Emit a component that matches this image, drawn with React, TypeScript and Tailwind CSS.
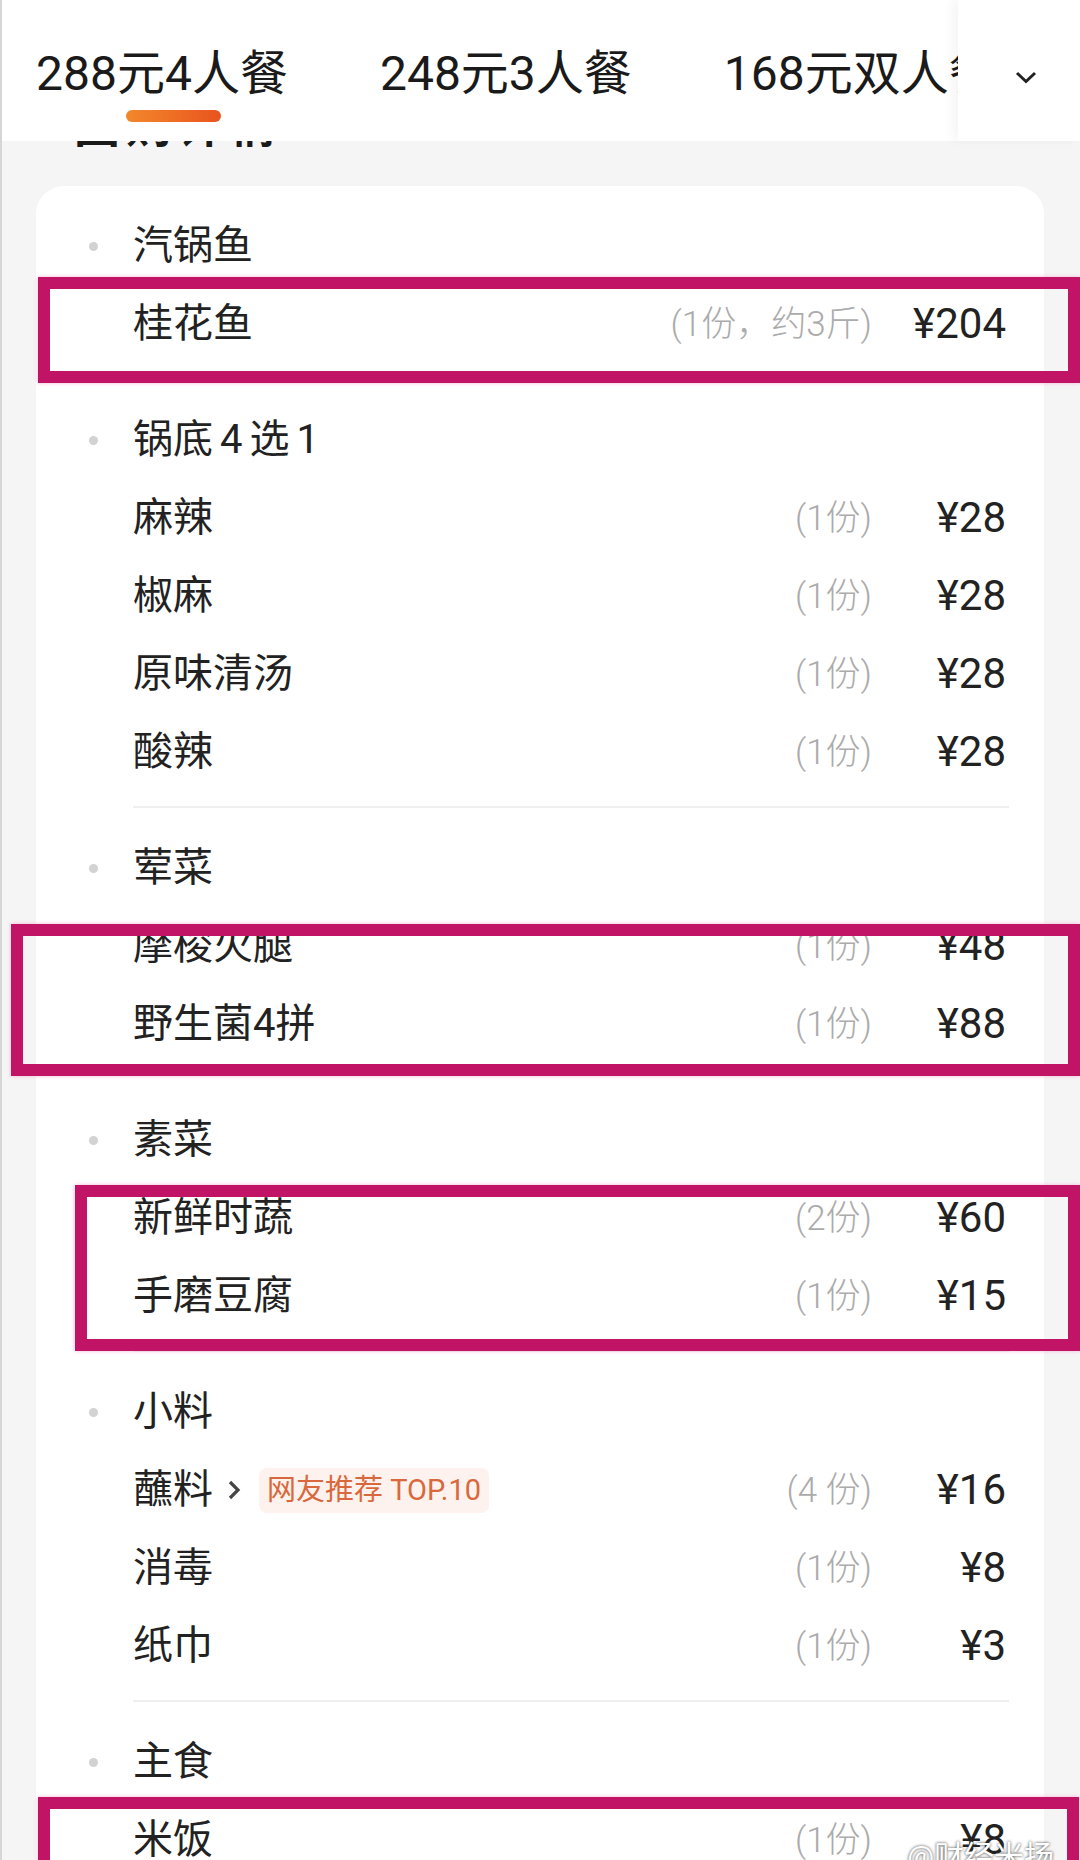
import React from "react";

interface Item {
  name: string;
  qty: string;
  price: string;
  tag?: string;
}

interface Group {
  title: React.ReactNode;
  key: string;
  noLine?: boolean;
  items: Item[];
}

const tabs = ["288元4人餐", "248元3人餐", "168元双人餐"];

const groups: Group[] = [
  {
    key: "fish",
    title: "汽锅鱼",
    items: [{ name: "桂花鱼", qty: "(1份，约3斤)", price: "¥204" }],
  },
  {
    key: "base",
    title: (
      <>
        锅底<span className="mx-[7px]">4</span>选<span className="ml-[7px]">1</span>
      </>
    ),
    items: [
      { name: "麻辣", qty: "(1份)", price: "¥28" },
      { name: "椒麻", qty: "(1份)", price: "¥28" },
      { name: "原味清汤", qty: "(1份)", price: "¥28" },
      { name: "酸辣", qty: "(1份)", price: "¥28" },
    ],
  },
  {
    key: "meat",
    title: "荤菜",
    items: [
      { name: "摩梭火腿", qty: "(1份)", price: "¥48" },
      { name: "野生菌4拼", qty: "(1份)", price: "¥88" },
    ],
  },
  {
    key: "veg",
    title: "素菜",
    noLine: true,
    items: [
      { name: "新鲜时蔬", qty: "(2份)", price: "¥60" },
      { name: "手磨豆腐", qty: "(1份)", price: "¥15" },
    ],
  },
  {
    key: "side",
    title: "小料",
    items: [
      { name: "蘸料", qty: "(4 份)", price: "¥16", tag: "网友推荐 TOP.10" },
      { name: "消毒", qty: "(1份)", price: "¥8" },
      { name: "纸巾", qty: "(1份)", price: "¥3" },
    ],
  },
  {
    key: "staple",
    title: "主食",
    items: [{ name: "米饭", qty: "(1份)", price: "¥8" }],
  },
];

// red annotation frames drawn over the screenshot
const marks = [
  "left-[36px] top-[277px] w-[1042px] h-[106px]",
  "left-[9px] top-[924px] w-[1069px] h-[152px]",
  "left-[73px] top-[1185px] w-[1005px] h-[166px]",
  "left-[36px] top-[1797px] w-[1041px] h-[120px]",
];

function Row({ item }: { item: Item }) {
  return (
    <div className="flex h-[78px] items-center pl-[97px] pr-[38px]">
      <div className="flex flex-1 items-center">
        <span className="text-[40px] leading-none text-[#222]">{item.name}</span>
        {item.tag && (
          <>
            <svg width="14" height="22" viewBox="0 0 14 22" className="ml-[14px]">
              <path d="M3 3 L11 11 L3 19" fill="none" stroke="#444" strokeWidth="3.2" />
            </svg>
            <span className="ml-[18px] rounded-[8px] bg-[#fdf2ee] px-[8px] py-[8px] text-[29px] leading-none text-[#d9683c]">
              {item.tag}
            </span>
          </>
        )}
      </div>
      <span className="text-[35px] font-light leading-none text-[#ababab]">{item.qty}</span>
      <span className="w-[134px] text-right text-[42px] leading-none text-[#222]">{item.price}</span>
    </div>
  );
}

export default function App() {
  return (
    <div className="relative h-[1860px] w-[1080px] overflow-hidden border-l-2 border-[#d6d6d6] bg-[#f5f5f5] font-['Roboto','Noto_Sans_CJK_SC',sans-serif]">
      <div className="relative z-10 h-[141px] bg-white">
        <div className="flex gap-[92px] whitespace-nowrap pl-[34px] pt-[50px]">
          {tabs.map((t, i) => (
            <div key={t} className="flex flex-col items-center">
              <span className="text-[48px] leading-none text-[#1a1a1a]">{t}</span>
              {i === 0 && (
                <span className="ml-[24px] mt-[12px] h-[12px] w-[95px] rounded-full bg-linear-to-r from-[#f3872b] to-[#e8531e]" />
              )}
            </div>
          ))}
        </div>
        <div className="absolute right-0 top-0 flex h-full w-[122px] items-start justify-end bg-white pr-[43px] pt-[71px] shadow-[-6px_0_10px_rgba(0,0,0,0.04)]">
          <svg width="22" height="13" viewBox="0 0 22 13">
            <path d="M2 2 L11 10.5 L20 2" fill="none" stroke="#222" strokeWidth="3" />
          </svg>
        </div>
      </div>

      <div className="h-[45px]">
        <div className="h-[10px] overflow-hidden pl-[72px]">
          <div className="-mt-[40px] text-[46px] font-bold leading-[50px] tracking-[6px] text-[#1a1a1a]">团购详情</div>
        </div>
      </div>

      <div className="ml-[34px] w-[1008px] rounded-[28px] bg-white pb-[40px] pt-[21px]">
        {groups.map((g, gi) => (
          <div key={g.key}>
            {gi > 0 && (
              <div className="h-[38px] pl-[97px] pr-[35px] pt-[15px]">
                {!g.noLine && <div className="h-[2px] bg-[#efefef]" />}
              </div>
            )}
            <div className="flex h-[78px] items-center pl-[53px]">
              <span className="size-[9px] rounded-full bg-[#d2d2d2]" />
              <span className="ml-[35px] text-[40px] leading-none text-[#222]">{g.title}</span>
            </div>
            {g.items.map((it) => (
              <Row key={it.name} item={it} />
            ))}
          </div>
        ))}
      </div>

      {marks.map((m) => (
        <div
          key={m}
          className={`absolute z-20 border-[12px] border-[#c11466] shadow-[0_0_4px_#f6b3d6] ${m}`}
        />
      ))}

      <div className="absolute left-[905px] top-[1842px] z-30 text-[30px] leading-none text-white [text-shadow:0_0_3px_#333]">
        @财经米扬
      </div>
    </div>
  );
}
